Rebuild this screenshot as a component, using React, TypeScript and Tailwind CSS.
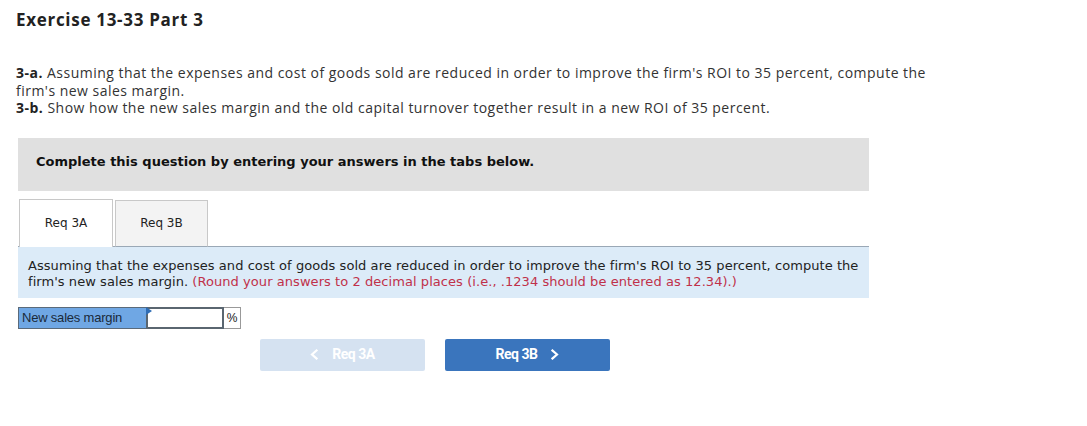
import React from "react";

function Chevron({ dir }: { dir: "left" | "right" }) {
  return (
    <svg width="8" height="11" viewBox="0 0 8 11" fill="none">
      <polyline
        points={dir === "right" ? "1.5,1.5 6,5.5 1.5,9.5" : "6.5,1.5 2,5.5 6.5,9.5"}
        stroke="currentColor"
        strokeWidth="2.2"
        strokeLinecap="square"
      />
    </svg>
  );
}

export default function App() {
  return (
    <div className="w-[1087px] h-[426px] bg-white text-[#333]">
      <div className="pl-[16px] pt-[9px]">
        <h1 className="text-[17px] font-bold text-[#222] leading-[22px] tracking-[0.7px] font-['Open_Sans',sans-serif]">
          Exercise 13-33 Part 3
        </h1>
        <div className="mt-[33px] text-[14px] leading-[17.5px] text-[#333] tracking-[0.48px] font-['Open_Sans',sans-serif] w-[925px]">
          <p>
            <b className="text-[#222]">3-a.</b> Assuming that the expenses and cost of goods sold are reduced in order to improve the firm's ROI to 35 percent, compute the firm's new sales margin.
          </p>
          <p>
            <b className="text-[#222]">3-b.</b> Show how the new sales margin and the old capital turnover together result in a new ROI of 35 percent.
          </p>
        </div>
      </div>
      <div className="ml-[18px] w-[851px] mt-[21px] font-['DejaVu_Sans',Verdana,sans-serif]">
        <div className="h-[53px] bg-[#e0e0e0] pl-[18px] pt-[14px] text-[13px] font-bold text-[#111]">
          Complete this question by entering your answers in the tabs below.
        </div>
        <div className="mt-[8px] flex items-end pl-[1px] h-[48px] relative z-10">
          <div className="w-[94px] h-[48px] bg-white border border-[#c8c8c8] border-b-0 flex items-center justify-center text-[12px] text-[#222]">
            Req 3A
          </div>
          <div className="ml-[2px] w-[93px] h-[47px] bg-[#f3f3f3] border border-[#c8c8c8] border-b-[#9aa8b6] flex items-center justify-center text-[12px] text-[#222]">
            Req 3B
          </div>
        </div>
        <div className="-mt-[1px] bg-[#dcebf8] border-t border-[#9aa8b6] px-[10px] pt-[11px] pb-[8px] text-[13px] leading-[16px] tracking-[0.06px] text-[#222]">
          Assuming that the expenses and cost of goods sold are reduced in order to improve the firm's ROI to 35 percent, compute the firm's new sales margin.{" "}
          <span className="text-[#c0314a]">(Round your answers to 2 decimal places (i.e., .1234 should be entered as 12.34).)</span>
        </div>
        <div className="mt-[9px] flex items-stretch h-[22px] font-['Liberation_Sans',Arial,sans-serif] text-[13px]">
          <div className="w-[128px] bg-[#6fa7e4] border border-[#5a6a7a] border-r-0 pl-[3px] flex items-center text-[#1a2a3a] tracking-[-0.2px]">
            New sales margin
          </div>
          <div className="relative w-[78px] bg-white border-2 border-[#5a6670]">
            <div className="absolute -left-[2px] -top-[2px] w-0 h-0 border-t-[4px] border-b-[4px] border-l-[6px] border-t-transparent border-b-transparent border-l-[#2f6db5]" />
          </div>
          <div className="w-[17px] bg-white border border-[#999] border-l-0 flex items-center justify-center text-[12px] text-[#222]">
            %
          </div>
        </div>
        <div className="mt-[10px] ml-[242px] flex gap-[20px] font-['Roboto',sans-serif] text-[14px] font-bold">
          <div className="w-[165px] h-[32px] rounded-[2px] bg-[#d5e2f1] text-white flex items-center justify-center gap-[14px] tracking-[-0.5px]">
            <Chevron dir="left" />
            <span>Req 3A</span>
          </div>
          <div className="w-[165px] h-[32px] rounded-[2px] bg-[#3a75bd] text-white flex items-center justify-center gap-[14px] tracking-[-0.5px]">
            <span>Req 3B</span>
            <Chevron dir="right" />
          </div>
        </div>
      </div>
    </div>
  );
}
